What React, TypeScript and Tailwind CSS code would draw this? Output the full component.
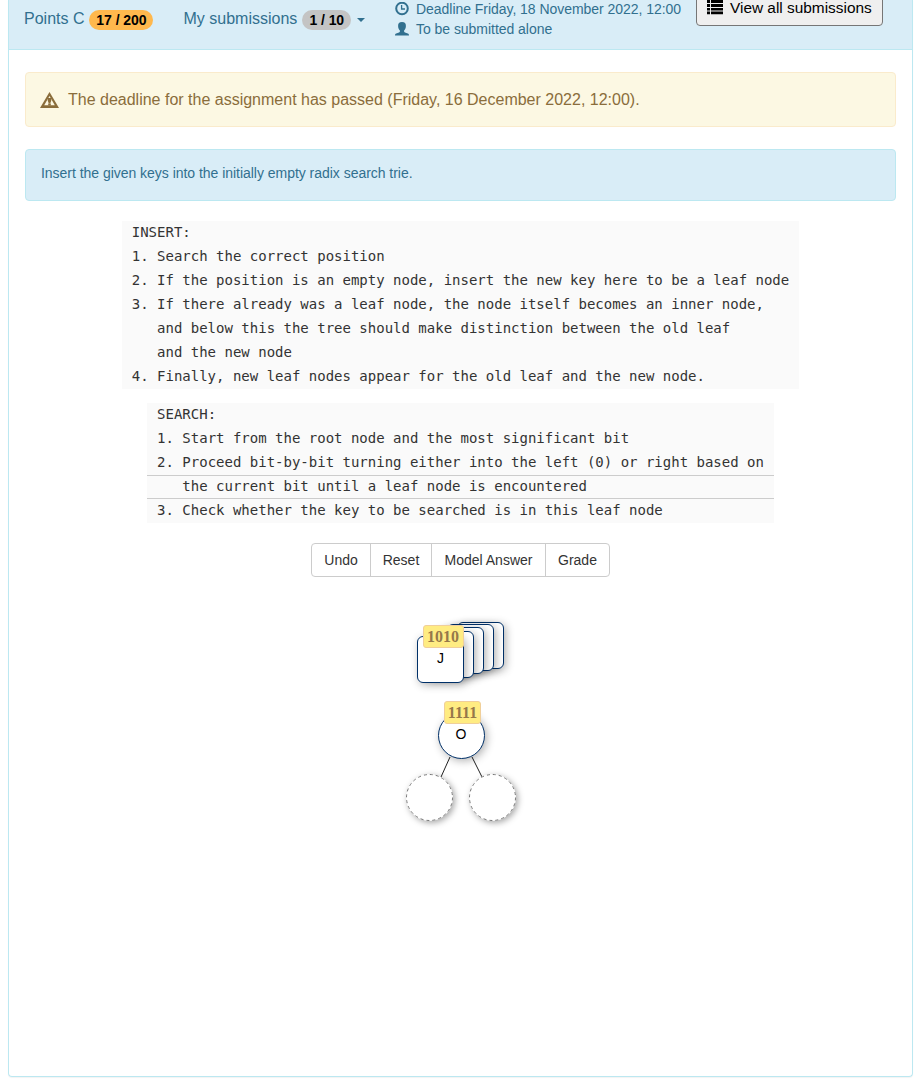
import React from "react";

const insertLines = [
  "INSERT:",
  "1. Search the correct position",
  "2. If the position is an empty node, insert the new key here to be a leaf node",
  "3. If there already was a leaf node, the node itself becomes an inner node,",
  "   and below this the tree should make distinction between the old leaf",
  "   and the new node",
  "4. Finally, new leaf nodes appear for the old leaf and the new node.",
];

const searchLines = [
  "SEARCH:",
  "1. Start from the root node and the most significant bit",
  "2. Proceed bit-by-bit turning either into the left (0) or right based on",
  "   the current bit until a leaf node is encountered",
  "3. Check whether the key to be searched is in this leaf node",
];

function ClockIcon() {
  return (
    <svg width="14" height="14" viewBox="0 0 14 14" fill="none" stroke="currentColor">
      <circle cx="7" cy="6.5" r="5.8" strokeWidth="2" />
      <path d="M6.6 3V7H10" strokeWidth="1.3" />
    </svg>
  );
}

function UserIcon() {
  return (
    <svg width="14" height="14" viewBox="0 0 14 14" fill="currentColor">
      <path d="M7 0C9.8 0 11 1.5 10.9 4C10.9 6 10 7.6 9.1 8.5V9.4C9.1 9.9 9.4 10.1 10 10.4L12.8 11.6C13.7 12 14 12.5 14 13.5H0C0 12.5.3 12 1.2 11.6L4 10.4C4.6 10.1 4.9 9.9 4.9 9.4V8.5C4 7.6 3.1 6 3.1 4C3 1.5 4.2 0 7 0Z" />
    </svg>
  );
}

function ListIcon() {
  return (
    <svg width="16" height="16" viewBox="0 0 16 16" fill="currentColor">
      <path d="M0 0h3v3H0zM4 0h12v3H4zM0 4h3v3H0zM4 4h12v3H4zM0 8h3v2.6H0zM4 8h12v2.6H4zM0 11.6h3v2.6H0zM4 11.6h12v2.6H4z" />
    </svg>
  );
}

function WarningIcon() {
  return (
    <svg width="19" height="16" viewBox="0 0 19 16" fill="currentColor">
      <path fillRule="evenodd" d="M9.5 0L19 16H0ZM9.5 4L4.2 13.2H14.8Z" />
      <path d="M7.7 6h3.6v2.6l-1 2.6H8.7l-1-2.6zM8.2 11.6h2.6v2H8.2z" />
    </svg>
  );
}

function Code({ lines, marked }: { lines: string[]; marked?: number }) {
  return (
    <div className="w-fit bg-[#fafafa] font-['DejaVu_Sans_Mono',monospace] text-[14px] text-[#333]">
      {lines.map((line, i) => (
        <div
          key={i}
          className={
            i === marked
              ? "h-6 border-y border-[#ccc] px-[10px] leading-[20px] whitespace-pre"
              : "h-6 px-[10px] leading-[22px] whitespace-pre"
          }
        >
          {line}
        </div>
      ))}
    </div>
  );
}

const card =
  "absolute size-[47px] rounded-[6px] border border-[#003068] bg-white shadow-[2px_2px_8px_rgba(0,0,0,0.3)]";
const empty =
  "absolute top-[174px] size-[47px] rounded-full bg-white shadow-[2px_2px_6px_rgba(0,0,0,0.35)]";
const keyLabel =
  "absolute h-[23px] rounded-[3px] border border-[#f0cf9a] bg-[#ffec82] text-center font-['Liberation_Serif',serif] text-[16px] leading-[22px] font-bold text-[#96784a]";

function EmptyRing() {
  return (
    <svg width="47" height="47" viewBox="0 0 47 47" fill="none">
      <circle cx="23.5" cy="23.5" r="23" stroke="#777" strokeDasharray="3 3" />
    </svg>
  );
}

function Canvas() {
  return (
    <div className="relative mx-auto mt-[23px] h-[240px] w-[110px] text-[14px] text-black">
      <div className={`${card} top-[22px] left-[51px]`} />
      <div className={`${card} top-[24px] left-[41px]`} />
      <div className={`${card} top-[27px] left-[31px]`} />
      <div className={`${card} top-[31px] left-[21px]`} />
      <div className={`${card} top-[36px] left-[11px] pl-px text-center leading-[42px]`}>J</div>
      <div className={`${keyLabel} top-[25px] left-[17px] w-[41px]`}>1010</div>

      <svg className="absolute top-0 left-0" width="110" height="240" stroke="#222">
        <path d="M44 157L35 177M66 157L76 177" />
      </svg>
      <div className="absolute top-[112px] left-[32px] size-[47px] rounded-full border border-[#003068] bg-white text-center leading-[42px] shadow-[2px_2px_8px_rgba(0,0,0,0.3)]">
        O
      </div>
      <div className={`${keyLabel} top-[101px] left-[38px] w-[37px] pl-px`}>1111</div>
      <div className={`${empty} left-0`}>
        <EmptyRing />
      </div>
      <div className={`${empty} left-[63px]`}>
        <EmptyRing />
      </div>
    </div>
  );
}

export default function App() {
  return (
    <div className="h-[1079px] overflow-hidden bg-white font-['Liberation_Sans',Arial,sans-serif] text-[14px] text-[#333]">
      <div className="ml-2 h-[1077px] w-[905px] rounded-b border border-t-0 border-[#bce8f1] shadow-[0_1px_1px_rgba(0,0,0,0.05)]">
        <header className="flex h-[50px] items-start border-b border-[#bce8f1] bg-[#d9edf7] pl-[15px] text-[#31708f]">
          <div className="mt-[9px] flex h-5 w-[159.5px] items-center text-[16px]">
            <span>Points C</span>
            <span className="ml-[5px] mt-[2px] flex h-5 w-[64px] items-center justify-center rounded-full bg-[#ffb84d] text-[14px] font-bold tracking-[-0.04px] text-black">
              17 / 200
            </span>
          </div>
          <div className="mt-[9px] flex h-5 w-[211.5px] items-center text-[16px]">
            <span>My submissions</span>
            <span className="ml-[5px] mt-[2px] flex h-5 w-[49px] items-center justify-center rounded-full bg-[#c4c4c4] text-[14px] font-bold tracking-[-0.1px] text-black">
              1 / 10
            </span>
            <span className="ml-[6px] mt-[1px] border-x-4 border-t-4 border-x-transparent border-t-[#31708f]" />
          </div>
          <div className="w-[301px] leading-5 tracking-[-0.04px]">
            <div className="-mt-px flex h-5 items-center gap-[7px]">
              <ClockIcon />
              Deadline Friday, 18 November 2022, 12:00
            </div>
            <div className="flex h-5 items-center gap-[7px]">
              <UserIcon />
              To be submitted alone
            </div>
          </div>
          <button className="-mt-[8px] flex h-[34px] w-[187px] items-center gap-[7px] rounded-[4px] border border-[#767676] bg-[#efefef] pb-[2px] pl-[10px] text-[15.4px] whitespace-nowrap text-black">
            <ListIcon />
            View all submissions
          </button>
        </header>

        <main className="px-4 pt-[22px]">
          <div className="flex h-[55px] items-center gap-[9px] rounded-[4px] border border-[#faebcc] bg-[#fcf8e3] pl-[14px] text-[16px] text-[#8a6d3b]">
            <WarningIcon />
            The deadline for the assignment has passed (Friday, 16 December 2022, 12:00).
          </div>
          <div className="mt-[22px] flex h-[52px] items-center rounded-[4px] border border-[#bce8f1] bg-[#d9edf7] pb-1 pl-[15px] tracking-[-0.03px] text-[#31708f]">
            Insert the given keys into the initially empty radix search trie.
          </div>
          <div className="mt-5 flex flex-col items-center gap-[14px]">
            <Code lines={insertLines} />
            <Code lines={searchLines} marked={3} />
          </div>
          <div className="mx-auto mt-5 flex h-[34px] w-[299px] divide-x divide-[#ccc] rounded-[4px] border border-[#ccc] bg-white">
            <button className="w-[59px]">Undo</button>
            <button className="w-[61px]">Reset</button>
            <button className="w-[114px]">Model Answer</button>
            <button className="flex-1">Grade</button>
          </div>
          <Canvas />
        </main>
      </div>
    </div>
  );
}
